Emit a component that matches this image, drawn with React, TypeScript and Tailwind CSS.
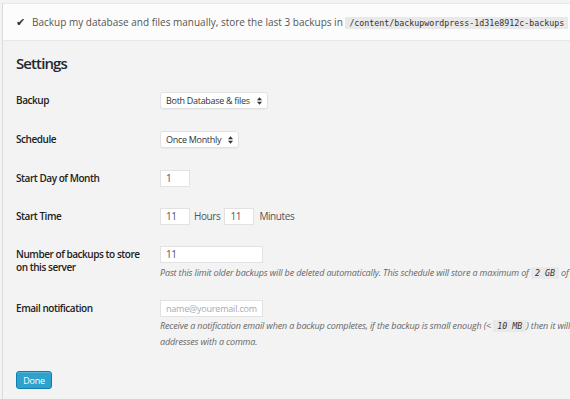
import React from "react";

const Code: React.FC<{ children: React.ReactNode; italic?: boolean }> = ({ children, italic }) => (
  <code
    className={`bg-[#e9e9e9] px-[4px] py-[1px] font-['DejaVu_Sans_Mono',monospace] text-[8.3px] tracking-normal text-[#333] ${italic ? "italic" : ""}`}
  >
    {children}
  </code>
);

const Select: React.FC<{ value: string; width: string }> = ({ value, width }) => (
  <div
    className={`flex h-[17px] items-center justify-between whitespace-nowrap rounded-[3px] border border-[#e2e2e2] bg-white pl-[5px] pr-[5px] text-[9px] tracking-[-0.3px] text-[#333] shadow-[0_1px_1px_rgba(0,0,0,0.04)] ${width}`}
  >
    <span>{value}</span>
    <svg width="5" height="8" viewBox="0 0 6 9" className="fill-[#333]">
      <path d="M3 0 L6 3.5 H0 Z" />
      <path d="M3 9 L6 5.5 H0 Z" />
    </svg>
  </div>
);

const Input: React.FC<{ value?: string; placeholder?: string; width: string }> = ({ value, placeholder, width }) => (
  <div className={`flex h-[17px] items-center whitespace-nowrap border border-[#e2e2e2] bg-white px-[5px] text-[10px] tracking-[-0.4px] ${width}`}>
    {value ? <span className="text-[#555]">{value}</span> : <span className="text-[9px] tracking-[-0.2px] text-[#aaa]">{placeholder}</span>}
  </div>
);

const Row: React.FC<{ label: React.ReactNode; children: React.ReactNode; className?: string }> = ({ label, children, className }) => (
  <div className={`flex ${className ?? ""}`}>
    <div className="w-[144px] shrink-0 pt-[2px] text-[10px] font-semibold leading-[13px] tracking-[-0.45px] text-[#222]">{label}</div>
    <div className="flex-1">{children}</div>
  </div>
);

export default function App() {
  return (
    <div className="h-[399px] w-[570px] overflow-hidden bg-[#f3f3f3] pl-[2px] font-['Open_Sans',sans-serif]">
      <div className="h-full border-l border-[#dcdcdc]">
        {/* Notice */}
        <div className="mt-[3px] flex h-[38px] items-center gap-[7px] whitespace-nowrap border-y border-[#e8e8e8] bg-[#fcfcfc] pl-[13px] text-[10px] text-[#555]">
          <span className="text-[11px] text-[#333]">✔</span>
          <span>
            Backup my database and files manually, store the last 3 backups in <Code>/content/backupwordpress-1d31e8912c-backups</Code>
          </span>
        </div>

        <div className="pl-[13px] pt-[11px]">
          <h2 className="text-[15px] font-semibold leading-[22px] tracking-[-0.9px] text-[#23282d]">Settings</h2>

          <div className="mt-[18px] flex flex-col">
            <Row label="Backup">
              <Select value="Both Database &amp; files" width="w-[108px]" />
            </Row>

            <Row label="Schedule" className="mt-[22px]">
              <Select value="Once Monthly" width="w-[79px]" />
            </Row>

            <Row label="Start Day of Month" className="mt-[22px]">
              <Input value="1" width="w-[30px]" />
            </Row>

            <Row label="Start Time" className="mt-[21px]">
              <div className="flex items-center gap-[4px] text-[10px] tracking-[-0.4px] text-[#555]">
                <Input value="11" width="w-[30px]" />
                <span>Hours</span>
                <Input value="11" width="w-[30px]" />
                <span className="ml-[1px]">Minutes</span>
              </div>
            </Row>

            <Row label={<>Number of backups to store<br />on this server</>} className="mt-[21px]">
              <Input value="11" width="w-[103px]" />
              <p className="mt-[2px] whitespace-nowrap text-[9px] italic leading-[15px] tracking-[-0.15px] text-[#666]">
                Past this limit older backups will be deleted automatically. This schedule will store a maximum of <Code italic>2 GB</Code> of backups on your server.
              </p>
            </Row>

            <Row label="Email notification" className="mt-[19px]">
              <Input placeholder="name@youremail.com" width="w-[103px]" />
              <p className="mt-[1px] w-[612px] text-[9px] italic leading-[15px] tracking-[-0.15px] text-[#666]">
                Receive a notification email when a backup completes, if the backup is small enough (&lt; <Code italic>10 MB</Code>) then it will be attached to the email. Separate multiple email addresses with a comma.
              </p>
            </Row>
          </div>

          <button className="mt-[22px] h-[18px] w-[36px] rounded-[3px] border border-[#0c7fb0] bg-[#2ea2cc] text-[9px] leading-none tracking-[-0.3px] text-white shadow-[inset_0_1px_0_rgba(120,200,230,0.5)]">
            Done
          </button>
        </div>
      </div>
    </div>
  );
}
